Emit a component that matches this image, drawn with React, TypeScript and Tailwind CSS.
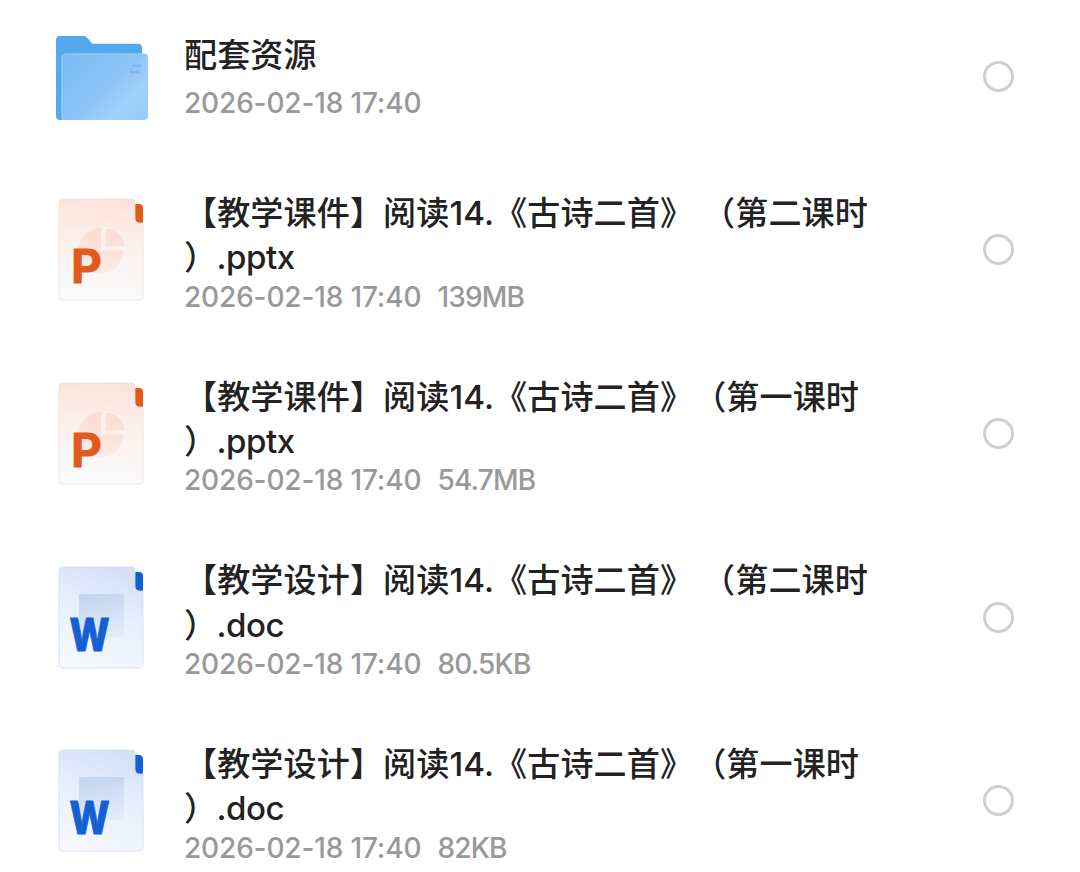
type FileKind = 'folder' | 'ppt' | 'doc';

interface FileItem {
  kind: FileKind;
  title: string;
  rest?: string;
  date: string;
  size?: string;
}

const files: FileItem[] = [
  { kind: 'folder', title: '配套资源', date: '2026-02-18 17:40' },
  { kind: 'ppt', title: '【教学课件】阅读14.《古诗二首》 （第二课时', rest: '）.pptx', date: '2026-02-18 17:40', size: '139MB' },
  { kind: 'ppt', title: '【教学课件】阅读14.《古诗二首》（第一课时', rest: '）.pptx', date: '2026-02-18 17:40', size: '54.7MB' },
  { kind: 'doc', title: '【教学设计】阅读14.《古诗二首》 （第二课时', rest: '）.doc', date: '2026-02-18 17:40', size: '80.5KB' },
  { kind: 'doc', title: '【教学设计】阅读14.《古诗二首》（第一课时', rest: '）.doc', date: '2026-02-18 17:40', size: '82KB' },
];

function FolderIcon() {
  return (
    <svg className="w-[94px] h-[86px]" viewBox="0 0 94 86" fill="none">
      <defs>
        <linearGradient id="folderFront" x1="14" y1="16" x2="86" y2="88" gradientUnits="userSpaceOnUse">
          <stop stopColor="#78baf4" />
          <stop offset="0.5" stopColor="#8dc5f8" />
          <stop offset="0.78" stopColor="#a2d0fb" />
          <stop offset="1" stopColor="#98cbf9" />
        </linearGradient>
      </defs>
      <path d="M1 5a4 4 0 0 1 4-4h23c2 0 3.500.6 4.800 2.200l3.400 4.200c.7.9 1.500 1.300 2.600 1.300H83a4 4 0 0 1 4 4V60L20 85H5a4 4 0 0 1-4-4Z" fill="#53a9eb" />
      <path d="M6.500 22a3.500 3.500 0 0 1 3.500-3.500h79a4 4 0 0 1 4 4V81a4 4 0 0 1-4 4H6.500Z" fill="url(#folderFront)" />
      <path d="M7 84V22a3 3 0 0 1 3-3h79" stroke="#98cdf9" />
      <path d="M77 31h9M75 37h10" stroke="#7ab6ec" strokeWidth="2.500" />
    </svg>
  );
}

function PptIcon() {
  return (
    <svg className="w-[86px] h-[103px]" viewBox="0 0 86 103" fill="none">
      <defs>
        <linearGradient id="pptPage" x1="50" y1="0" x2="38" y2="102" gradientUnits="userSpaceOnUse">
          <stop stopColor="#fde2d7" />
          <stop offset="0.45" stopColor="#fcf1ed" />
          <stop offset="1" stopColor="#f9fbfc" />
        </linearGradient>
        <linearGradient id="pptPie" x1="50" y1="28" x2="38" y2="74" gradientUnits="userSpaceOnUse">
          <stop stopColor="#fad9cd" />
          <stop offset="1" stopColor="#fcebe5" />
        </linearGradient>
      </defs>
      <path d="M77 6h4a4 4 0 0 1 4 4v15h-3c-3 0-5-2-5-5Z" fill="#e3591c" />
      <path d="M5 1h68c3 0 4 1 4 4v15c0 4 2 5 5 5h3v73a4 4 0 0 1-4 4H5a4 4 0 0 1-4-4V5a4 4 0 0 1 4-4Z" fill="url(#pptPage)" stroke="#e6dfdc" strokeWidth="0.8" />
      <path d="M43 30a22.500 22.500 0 1 0 22.500 22.500H43Z" fill="url(#pptPie)" />
      <path d="M46.500 29.500a21 21 0 0 1 21.500 19.500H46.500Z" fill="#fae0d7" stroke="#fdf2ed" strokeWidth="1.500" />
      <text x="13" y="85" className="font-[Inter,sans-serif] text-[46px] font-bold" fill="#e3591c" stroke="#e3591c" strokeWidth="0.8" strokeLinejoin="round" textLength="31" lengthAdjust="spacingAndGlyphs">P</text>
    </svg>
  );
}

function DocIcon() {
  return (
    <svg className="w-[86px] h-[103px]" viewBox="0 0 86 103" fill="none">
      <defs>
        <linearGradient id="docPage" x1="66" y1="0" x2="30" y2="102" gradientUnits="userSpaceOnUse">
          <stop stopColor="#d1dff8" />
          <stop offset="0.5" stopColor="#e8f0fd" />
          <stop offset="1" stopColor="#f5f9fe" />
        </linearGradient>
        <linearGradient id="docBlock" x1="42" y1="28" x2="52" y2="72" gradientUnits="userSpaceOnUse">
          <stop stopColor="#c5d5f1" />
          <stop offset="1" stopColor="#e3ecfb" />
        </linearGradient>
      </defs>
      <path d="M77 6h4a4 4 0 0 1 4 4v15h-3c-3 0-5-2-5-5Z" fill="#155fd5" />
      <path d="M5 1h68c3 0 4 1 4 4v15c0 4 2 5 5 5h3v73a4 4 0 0 1-4 4H5a4 4 0 0 1-4-4V5a4 4 0 0 1 4-4Z" fill="url(#docPage)" stroke="#d3dceb" strokeWidth="0.8" />
      <path d="M21 28h45v43H21Z" fill="url(#docBlock)" />
      <text x="11.500" y="84.500" className="font-[Inter,sans-serif] text-[45px] font-extrabold" fill="#155fd5" stroke="#155fd5" strokeWidth="1" strokeLinejoin="round" textLength="40" lengthAdjust="spacingAndGlyphs">W</text>
    </svg>
  );
}

function FileIcon({ kind }: { kind: FileKind }) {
  if (kind === 'folder') return <FolderIcon />;
  if (kind === 'ppt') return <PptIcon />;
  return <DocIcon />;
}

function FileRow({ file }: { file: FileItem }) {
  const isFolder = file.kind === 'folder';
  return (
    <div className={isFolder ? 'flex items-center h-[153px] mb-[5px]' : 'flex items-center h-[183.7px]'}>
      {/* Icon */}
      <div className={isFolder ? 'w-32 shrink-0 pt-[3px]' : 'w-32 shrink-0 pl-[3px]'}>
        <FileIcon kind={file.kind} />
      </div>

      {/* Name and meta */}
      <div className={isFolder ? 'flex-1 min-w-0 pl-px pb-[5px]' : 'flex-1 min-w-0 pl-px pb-0.5'}>
        <div className="text-[33.1px] leading-[44.25px] font-medium text-[#222222] [text-spacing-trim:space-all]">
          <p className="whitespace-pre tracking-[0.1px]">{file.title}</p>
          {file.rest && <p className="whitespace-pre -tracking-[0.5px]">{file.rest}</p>}
        </div>
        <div className={isFolder ? 'mt-2 h-[29px]' : 'h-[27px]'}>
          <p className="flex gap-4 text-[28px] leading-[34px] font-[450] text-[#999999] whitespace-pre -tracking-[0.15px]">
            <span>{file.date}</span>
            {file.size && <span className="-tracking-[0.8px]">{file.size}</span>}
          </p>
        </div>
      </div>

      {/* Select circle */}
      <button aria-label="选择" className="w-[31px] h-[31px] shrink-0 rounded-full border-[3px] border-[#d0d0d0]" />
    </div>
  );
}

export default function App() {
  return (
    <div className="h-[872px] overflow-hidden bg-white pl-[55px] pr-[66px] font-[Inter,'Noto_Sans_CJK_SC',sans-serif]">
      {files.map((file, i) => (
        <FileRow key={i} file={file} />
      ))}
    </div>
  );
}
